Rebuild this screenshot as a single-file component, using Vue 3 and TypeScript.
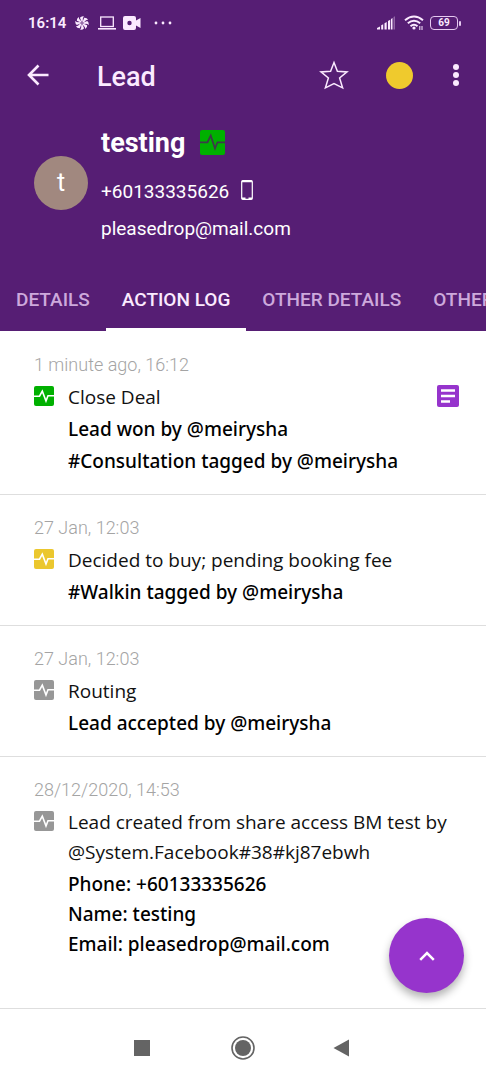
<script setup lang="ts">
import { ref } from 'vue'

type Tone = 'green' | 'yellow' | 'grey'

interface LogEntry {
  id: number
  date: string
  tone: Tone
  title: string
  details: string[]
  note?: boolean
}

const tabs = ['DETAILS', 'ACTION LOG', 'OTHER DETAILS', 'OTHER']
const activeTab = ref(1)

const entries: LogEntry[] = [
  {
    id: 1,
    date: '1 minute ago, 16:12',
    tone: 'green',
    title: 'Close Deal',
    details: ['Lead won by @meirysha', '#Consultation tagged by @meirysha'],
    note: true,
  },
  {
    id: 2,
    date: '27 Jan, 12:03',
    tone: 'yellow',
    title: 'Decided to buy; pending booking fee',
    details: ['#Walkin tagged by @meirysha'],
  },
  {
    id: 3,
    date: '27 Jan, 12:03',
    tone: 'grey',
    title: 'Routing',
    details: ['Lead accepted by @meirysha'],
  },
  {
    id: 4,
    date: '28/12/2020, 14:53',
    tone: 'grey',
    title: 'Lead created from share access BM test by @System.Facebook#38#kj87ebwh',
    details: ['Phone: +60133335626\nName: testing\nEmail: pleasedrop@mail.com'],
  },
]
</script>

<template>
  <div class="screen">
    <header class="header">
      <div class="status">
        <span class="clock">16:14</span>
        <svg class="s-fan" viewBox="0 0 14 14" width="14" height="14" aria-hidden="true">
          <g fill="currentColor">
            <path v-for="n in 8" :key="n" d="M7 6.600L4.900 1.800Q6.500 -.2 9 .4Q7.300 2 7.900 4.200z" :transform="`rotate(${n * 45} 7 7)`" />
          </g>
        </svg>
        <svg class="s-laptop" viewBox="0 0 18 14" width="18" height="14" aria-hidden="true">
          <rect x="2.700" y="1" width="12.600" height="9.500" fill="none" stroke="currentColor" stroke-width="1.300" />
          <path d="M0 12.800h18" stroke="currentColor" stroke-width="1.600" />
        </svg>
        <svg class="s-cam" viewBox="0 0 18 14" width="18" height="14" aria-hidden="true">
          <path fill="currentColor" fill-rule="evenodd" d="M2 0h9a2 2 0 0 1 2 2v2.500L17.500 2v10L13 9.500V12a2 2 0 0 1-2 2H2a2 2 0 0 1-2-2V2a2 2 0 0 1 2-2zM6.500 4.800a2.200 2.200 0 1 0 0 4.400a2.200 2.200 0 0 0 0-4.400z" />
        </svg>
        <svg class="s-more" viewBox="0 0 18 4" width="18" height="4" aria-hidden="true">
          <g fill="currentColor"><circle cx="2" cy="2" r="1.400" /><circle cx="9" cy="2" r="1.400" /><circle cx="16" cy="2" r="1.400" /></g>
        </svg>
        <span class="spacer"></span>
        <svg viewBox="0 0 19 14" width="19" height="14" aria-hidden="true">
          <g fill="currentColor">
            <path d="M0 13.500V12l3-1.500v3zM4.200 13.500V9.200l2-1v5.300zM7.500 13.500V7.300l2.200-1.200v7.400zM11 13.500V5l2.200-1.300v9.800zM14 13.500V3l1.500-1v11.500z" />
            <path d="M16.500 13.500V1l1.500-.8v13.300z" opacity=".35" />
          </g>
        </svg>
        <svg class="s-wifi" viewBox="0 0 20 16" width="20" height="16" aria-hidden="true">
          <g fill="none" stroke="currentColor" stroke-width="2">
            <path d="M1 5.200Q10-2.200 19 5.200" /><path d="M3.800 8.300Q10 3.200 16.200 8.300" /><path d="M6.500 11.200Q10 8.200 13.500 11.200" />
          </g>
          <circle cx="10" cy="13" r="1.600" fill="currentColor" />
          <path d="M15.800 11v4M18 11v4" stroke="currentColor" stroke-width="1" />
        </svg>
        <span class="battery"><span class="cell">69</span><span class="cap"></span></span>
      </div>

      <div class="appbar">
        <button class="icon-btn" type="button" aria-label="Back">
          <svg viewBox="0 0 24 24" width="24" height="24">
            <path d="M12.500 2.500L3 12L12.500 21.500M3 12H22.500" fill="none" stroke="currentColor" stroke-width="2.600" />
          </svg>
        </button>
        <h1>Lead</h1>
        <button class="icon-btn star" type="button" aria-label="Favourite">
          <svg viewBox="0 0 30 30" width="30" height="30">
            <path d="M15 2.500L18.400 11.200L28 11.900L20.600 17.900L23.600 27.800L15 23.600L6.400 27.800L9.400 17.900L2 11.900L11.600 11.200z" fill="none" stroke="currentColor" stroke-width="1.500" />
          </svg>
        </button>
        <button class="icon-btn dot" type="button" aria-label="Lead status"></button>
        <button class="icon-btn" type="button" aria-label="More options">
          <svg viewBox="0 0 8 24" width="8" height="24">
            <g fill="currentColor"><circle cx="4" cy="4" r="3" /><circle cx="4" cy="12" r="3" /><circle cx="4" cy="20" r="3" /></g>
          </svg>
        </button>
      </div>

      <section class="profile">
        <span class="avatar">t</span>
        <div class="contact">
          <h2>
            testing
            <svg class="pulse" viewBox="0 0 20 20" width="25" height="25" aria-hidden="true">
              <rect width="20" height="20" rx="1.600" fill="#00b000" />
              <path d="M0 9.800H6L8.600 4.500L12 14.800L14 9.800H20" fill="none" stroke="#3d3a4a" stroke-width="1.400" />
            </svg>
          </h2>
          <p class="phone">
            +60133335626
            <svg class="handset" viewBox="0 0 12 20" width="12" height="20" aria-hidden="true">
              <rect x=".7" y=".7" width="10.600" height="18.600" rx="1" fill="none" stroke="currentColor" stroke-width="1.200" />
              <path d="M1 1.500h10M1 18.200h3.500M7.500 18.200H11" stroke="currentColor" stroke-width="1.600" />
            </svg>
          </p>
          <p>pleasedrop@mail.com</p>
        </div>
      </section>

      <nav class="tabs" aria-label="Lead sections">
        <button
          v-for="(tab, i) in tabs"
          :key="i"
          type="button"
          :class="['tab', { active: i === activeTab }]"
          @click="activeTab = i"
        >{{ tab }}</button>
      </nav>
    </header>

    <main class="log">
      <article v-for="entry in entries" :key="entry.id" class="entry">
        <time>{{ entry.date }}</time>
        <div class="row">
          <svg :class="['badge', entry.tone]" viewBox="0 0 20 20" width="20" height="20" aria-hidden="true">
            <rect width="20" height="20" rx="2" fill="currentColor" />
            <path d="M0 10.200H5.500L8.300 5.200L12 15L14 9.800H20" fill="none" stroke="#fff" stroke-width="1.600" />
          </svg>
          <div class="body">
            <p class="title">{{ entry.title }}</p>
            <p v-for="line in entry.details" :key="line" class="detail">{{ line }}</p>
          </div>
          <button v-if="entry.note" class="note" type="button" aria-label="Open note">
            <svg viewBox="0 0 22 22" width="22" height="22">
              <rect width="22" height="22" rx="2" fill="#9634cc" />
              <path d="M4 5.500H18M4 11H18M4 16.500H13" stroke="#fff" stroke-width="2.400" />
            </svg>
          </button>
        </div>
      </article>
      <button class="fab" type="button" aria-label="Scroll to top">
        <svg viewBox="0 0 16 10" width="16" height="10">
          <path d="M1.200 8.800L8 2L14.800 8.800" fill="none" stroke="#fff" stroke-width="2.500" />
        </svg>
      </button>
    </main>

    <footer class="sysnav">
      <button type="button" aria-label="Recent apps">
        <svg viewBox="0 0 24 24" width="24" height="24"><rect x="3" y="4" width="16" height="16" fill="#646464" /></svg>
      </button>
      <button type="button" aria-label="Home">
        <svg viewBox="0 0 24 24" width="24" height="24">
          <circle cx="12" cy="12" r="11" fill="none" stroke="#646464" stroke-width="1.600" />
          <circle cx="12" cy="12" r="8" fill="#646464" />
        </svg>
      </button>
      <button type="button" aria-label="Back to previous app">
        <svg viewBox="0 0 24 24" width="24" height="24"><path d="M2.500 12L18 3.500V20.500z" fill="#646464" /></svg>
      </button>
    </footer>
  </div>
</template>

<style>
body {
  margin: 0;
  background: #fff;
}
</style>

<style scoped>
* {
  box-sizing: border-box;
}
h1, h2, p {
  margin: 0;
}
svg {
  display: block;
  flex: none;
}
button {
  padding: 0;
  border: 0;
  background: none;
  color: inherit;
  font: inherit;
  cursor: pointer;
}
.screen {
  display: flex;
  flex-direction: column;
  min-height: 100vh;
  background: #fff;
  font-family: Roboto, sans-serif;
}
.header {
  background: #561e74;
  color: #fbeaff;
}
.status {
  display: flex;
  align-items: center;
  height: 46px;
  padding: 0 25px 0 28px;
}
.clock {
  font-size: 15px;
  font-weight: 600;
  margin-right: 9px;
}
.s-laptop {
  margin-left: 9px;
}
.s-cam {
  margin-left: 7px;
}
.s-more {
  margin-left: 13px;
}
.spacer {
  flex: 1;
}
.s-wifi {
  margin: 0 6px 0 8px;
}
.battery {
  display: flex;
  align-items: center;
}
.cell {
  width: 28px;
  height: 14px;
  border: 1px solid #e5c9f0;
  border-radius: 4px;
  font-size: 10px;
  font-weight: 700;
  line-height: 12px;
  text-align: center;
}
.cap {
  width: 2px;
  height: 5px;
  margin-left: 1px;
  border-radius: 1px;
  background: #e5c9f0;
}
.appbar {
  display: flex;
  align-items: center;
  height: 60px;
  padding: 0 26px 2px;
}
h1 {
  flex: 1;
  margin: 4px 0 0 47px;
  font-size: 27px;
  font-weight: 500;
}
.star {
  margin-right: 37px;
}
.dot {
  width: 27px;
  height: 27px;
  margin-right: 39px;
  border-radius: 50%;
  background: #efca2d;
}
.profile {
  display: flex;
  gap: 13px;
  padding: 19px 34px 22px;
}
.avatar {
  flex: none;
  width: 54px;
  height: 54px;
  margin-top: 31px;
  border-radius: 50%;
  background: #a1887f;
  color: #fff;
  font-size: 25px;
  line-height: 54px;
  text-align: center;
}
.contact {
  color: #fff;
  font-size: 19px;
  line-height: 37px;
}
h2 {
  display: flex;
  align-items: center;
  gap: 15px;
  margin-bottom: 11px;
  font-size: 27px;
  font-weight: 700;
  line-height: 37px;
}
.pulse {
  margin-bottom: 3px;
}
.phone {
  display: flex;
  align-items: center;
  gap: 12px;
}
.handset {
  margin-bottom: 3px;
}
.tabs {
  display: flex;
  height: 62px;
  overflow-x: auto;
  scrollbar-width: none;
}
.tab {
  flex: none;
  padding: 2px 16px 0;
  border-bottom: 3px solid transparent;
  color: #cda9dc;
  font-size: 19px;
  font-weight: 500;
  white-space: nowrap;
}
.tab.active {
  border-bottom-color: #fff;
  color: #fbeaff;
}
.log {
  position: relative;
  flex: 1;
  padding-top: 1px;
}
.entry {
  padding: 17px 27px 18px 34px;
  border-bottom: 1px solid #dedede;
}
.entry:nth-last-of-type(1) {
  border-bottom: 0;
}
time {
  display: block;
  margin-bottom: 1px;
  color: #a4a4a4;
  font-size: 18px;
  font-weight: 300;
  line-height: 32px;
}
.row {
  display: flex;
}
.badge {
  margin: 4px 14px 0 0;
}
.green {
  color: #00b000;
}
.yellow {
  color: #ebc72e;
}
.grey {
  color: #979797;
}
.body {
  flex: 1;
  font-family: "Open Sans", "Noto Sans", sans-serif;
  font-size: 19px;
  line-height: 30px;
}
.title {
  color: #111;
  font-weight: 400;
}
.detail {
  margin-top: 2px;
  color: #000;
  font-family: "Noto Sans", sans-serif;
  font-weight: 500;
  white-space: pre-line;
}
.note {
  align-self: flex-start;
  margin-top: 3px;
}
.fab {
  position: absolute;
  right: 22px;
  bottom: 15px;
  display: grid;
  place-items: center;
  width: 75px;
  height: 75px;
  border-radius: 50%;
  background: #9634cc;
  box-shadow: 0 5px 9px rgba(0, 0, 0, 0.3);
}
.sysnav {
  display: flex;
  justify-content: center;
  gap: 76px;
  height: 72px;
  padding-top: 7px;
  border-top: 1px solid #dedede;
}
</style>
